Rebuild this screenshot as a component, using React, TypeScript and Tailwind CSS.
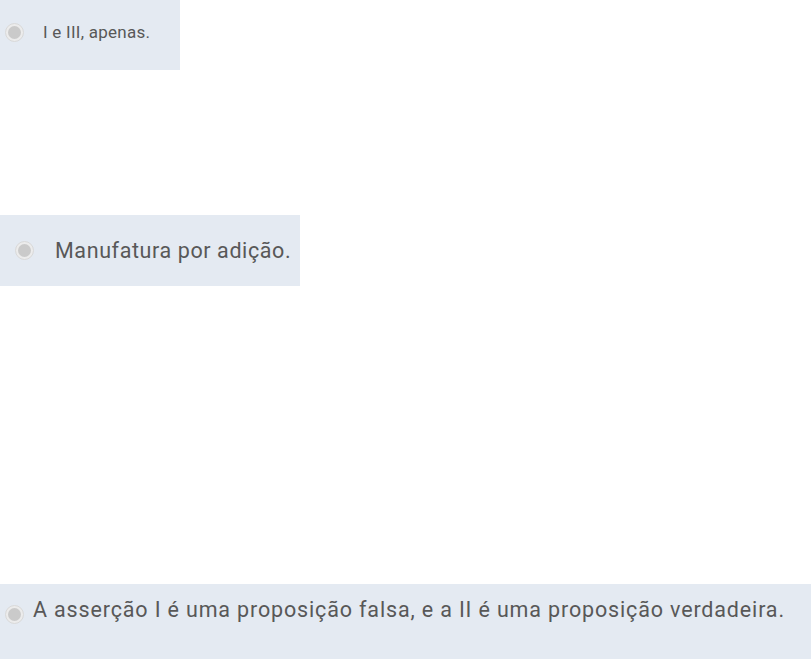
import React from 'react';

const Radio: React.FC<{ className?: string }> = ({ className = '' }) => (
  <span className={`flex h-[19px] w-[19px] shrink-0 items-center justify-center rounded-full border border-[#d9d9d9] bg-[#ececec] ${className}`}>
    <span className="h-[13px] w-[13px] rounded-full bg-[#cacaca]" />
  </span>
);

const App: React.FC = () => {
  return (
    <div className="flex h-[659px] w-[811px] flex-col overflow-hidden bg-white text-[#585858]" style={{ fontFamily: 'Roboto, "Noto Sans", sans-serif' }}>
      {/* opção 1 */}
      <div className="flex h-[70px] w-[180px] items-center bg-[#e4eaf2] pb-[6px] pl-[5px]">
        <Radio />
        <span className="ml-[19px] whitespace-nowrap text-[17px] leading-none tracking-[0.25px]">I e III, apenas.</span>
      </div>

      {/* opção 2 */}
      <div className="mt-[145px] flex h-[71px] w-[300px] items-center bg-[#e4eaf2] pl-[15px]">
        <Radio />
        <span className="ml-[21px] whitespace-nowrap text-[21.5px] leading-none tracking-[0.6px]">Manufatura por adição.</span>
      </div>

      {/* opção 3 */}
      <div className="mt-[298px] flex h-[75px] w-full shrink-0 items-start bg-[#e4eaf2] pl-[5px] pt-[16px]">
        <Radio className="mt-[5px]" />
        <span className="ml-[9px] whitespace-nowrap text-[21.5px] leading-[20px] tracking-[0.85px]">
          A asserção I é uma proposição falsa, e a II é uma proposição verdadeira.
        </span>
      </div>
    </div>
  );
};

export default App;
